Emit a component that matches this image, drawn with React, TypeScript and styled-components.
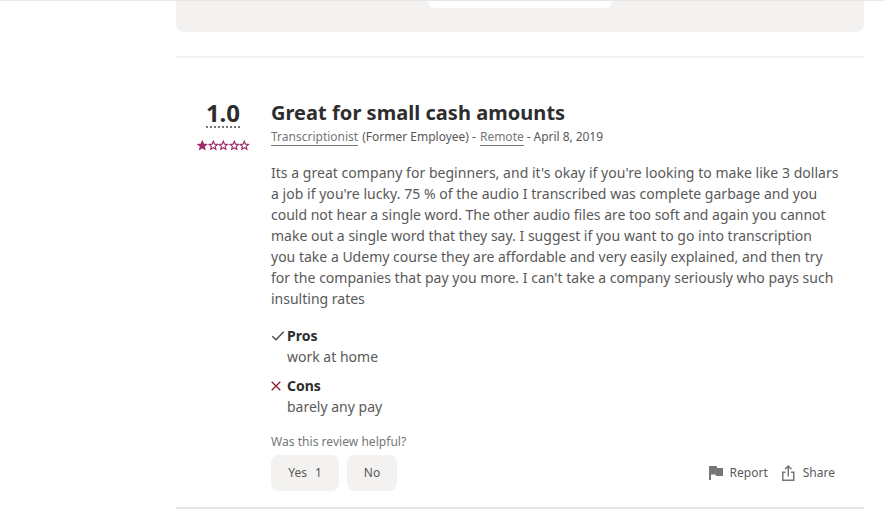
import React from 'react';
import styled, { createGlobalStyle } from 'styled-components';

const GlobalStyle = createGlobalStyle`
  * { box-sizing: border-box; }
  body {
    margin: 0;
    background: #fff;
    color: #595959;
    font-family: "Noto Sans", "Open Sans", sans-serif;
    overflow: hidden;
  }
  #root { display: flow-root; }
`;

const Page = styled.div`
  height: 521px;
  background: linear-gradient(#ebeae9, #ebeae9) top / 100% 1px no-repeat;
`;

const Column = styled.main`
  width: 688px;
  margin-left: 176px;
`;

const Banner = styled.div`
  height: 32px;
  display: flex;
  justify-content: center;
  border-top: 1px solid #e7e6e4;
  border-radius: 0 0 8px 8px;
  background: #f3f2f1;
`;

const BannerField = styled.div`
  width: 184px;
  height: 7px;
  border-radius: 0 0 6px 6px;
  background: #fff;
`;

const Review = styled.article`
  display: flex;
  height: 453px;
  margin-top: 24px;
  padding: 41px 26px 0 21px;
  border-top: 2px solid #f2f2f2;
  border-bottom: 2px solid #e5e5e5;
`;

const Rating = styled.div`
  width: 52px;
  margin-right: 22px;
  display: flex;
  flex-direction: column;
  align-items: center;
`;

const Score = styled.span`
  height: 29px;
  font-size: 24px;
  line-height: 27px;
  font-weight: 700;
  color: #2d2d2d;
  border-bottom: 2px dotted #767676;
`;

const Stars = styled.div`
  display: flex;
  margin: 12px 0 0 1px;
`;

const Star = styled.svg<{ $filled?: boolean }>`
  width: 10.6px;
  height: 11px;
  fill: ${(p) => (p.$filled ? '#9d2b6b' : 'none')};
  stroke: #9d2b6b;
  stroke-width: 1.15;
`;

const Body = styled.div`
  flex: 1;
  min-width: 0;
`;

const Title = styled.h2`
  margin: 0;
  font-size: 20px;
  line-height: 27px;
  letter-spacing: 0.04px;
  font-weight: 700;
  color: #2d2d2d;
`;

const Meta = styled.div`
  display: flex;
  gap: 4px;
  height: 20px;
  font-size: 12px;
  line-height: 22px;
  white-space: nowrap;
`;

const MetaLink = styled.a`
  height: 20px;
  color: #767676;
  border-bottom: 1px solid #767676;
`;

const MetaDate = styled.span`
  margin-left: -1px;
  letter-spacing: -0.05px;
`;

const Text = styled.p`
  margin: 16px 0 0;
  font-size: 14px;
  line-height: 21px;
`;

const Line = styled.span<{ $tracking: number }>`
  display: block;
  white-space: nowrap;
  letter-spacing: ${(p) => p.$tracking}px;
`;

const Point = styled.section<{ $gap: number }>`
  display: grid;
  grid-template-columns: 16px 1fr;
  align-items: center;
  margin-top: ${(p) => p.$gap}px;
  font-size: 14px;
  line-height: 21px;
`;

const PointTitle = styled.strong`
  color: #2d2d2d;
`;

const PointText = styled.span`
  grid-column: 2;
`;

const Question = styled.div`
  margin-top: 16px;
  font-size: 12px;
  line-height: 18px;
  letter-spacing: 0.04px;
  color: #767676;
`;

const Footer = styled.div`
  display: flex;
  align-items: center;
  gap: 8px;
  margin-top: 4px;
`;

const VoteButton = styled.button<{ $width: number }>`
  width: ${(p) => p.$width}px;
  height: 36px;
  display: flex;
  justify-content: center;
  align-items: center;
  gap: 8px;
  padding: 0;
  border: 0;
  border-radius: 8px;
  background: #f3f2f1;
  color: #595959;
  font: 12px/18px "Noto Sans", sans-serif;
`;

const Actions = styled.div`
  display: flex;
  gap: 14px;
  margin: 0 3px 0 auto;
`;

const Action = styled.button<{ $gap: number }>`
  display: flex;
  align-items: center;
  gap: ${(p) => p.$gap}px;
  padding: 0;
  border: 0;
  background: none;
  color: #595959;
  font: 12px/18px "Noto Sans", sans-serif;
`;

const Icon = styled.svg`
  display: block;
  flex: none;
`;

const reviewLines = [
  { tracking: 0.034, text: "Its a great company for beginners, and it's okay if you're looking to make like 3 dollars" },
  { tracking: 0.034, text: "a job if you're lucky. 75 % of the audio I transcribed was complete garbage and you" },
  { tracking: 0, text: 'could not hear a single word. The other audio files are too soft and again you cannot' },
  { tracking: 0.01, text: 'make out a single word that they say. I suggest if you want to go into transcription' },
  { tracking: 0.006, text: 'you take a Udemy course they are affordable and very easily explained, and then try' },
  { tracking: 0.022, text: "for the companies that pay you more. I can't take a company seriously who pays such" },
  { tracking: 0, text: 'insulting rates' },
];

export default function App() {
  return (
    <Page>
      <GlobalStyle />
      <Column>
        <Banner>
          <BannerField />
        </Banner>
        <Review>
          <Rating>
            <Score>1.0</Score>
            <Stars>
              {[1, 2, 3, 4, 5].map((n) => (
                <Star key={n} $filled={n === 1} viewBox="0 0 10.6 11">
                  <path d="M5.3 1.3 6.5 4.1 9.5 4.4 7.2 6.4 7.9 9.4 5.3 7.8 2.7 9.4 3.4 6.4 1.1 4.4 4.1 4.1Z" />
                </Star>
              ))}
            </Stars>
          </Rating>
          <Body>
            <Title>Great for small cash amounts</Title>
            <Meta>
              <MetaLink>Transcriptionist</MetaLink>
              <span>(Former Employee) -</span>
              <MetaLink>Remote</MetaLink>
              <MetaDate>- April 8, 2019</MetaDate>
            </Meta>
            <Text>
              {reviewLines.map(({ text, tracking }) => (
                <Line key={text} $tracking={tracking}>{text}</Line>
              ))}
            </Text>
            <Point $gap={16}>
              <Icon width="14" height="12" viewBox="0 0 14 12">
                <path d="M1.3 6.2 5 9.8 12.7 1.7" fill="none" stroke="#4b4b4b" strokeWidth="1.4" />
              </Icon>
              <PointTitle>Pros</PointTitle>
              <PointText>work at home</PointText>
            </Point>
            <Point $gap={8}>
              <Icon width="10" height="10" viewBox="0 0 10 10">
                <path d="M.7.7 9.3 9.3M9.3.7.7 9.3" fill="none" stroke="#8f1d2c" strokeWidth="1.3" />
              </Icon>
              <PointTitle>Cons</PointTitle>
              <PointText>barely any pay</PointText>
            </Point>
            <Question>Was this review helpful?</Question>
            <Footer>
              <VoteButton $width={68}>
                <span>Yes</span>
                <span>1</span>
              </VoteButton>
              <VoteButton $width={50}>No</VoteButton>
              <Actions>
                <Action $gap={7}>
                  <Icon width="14" height="14" viewBox="0 0 14 14">
                    <path d="M0 0H7.6L8.2 2H14V10H7L6.4 8.5H2V14H0Z" fill="#767676" />
                  </Icon>
                  Report
                </Action>
                <Action $gap={8}>
                  <Icon width="13" height="16" viewBox="0 0 13 16" fill="none" stroke="#767676" strokeWidth="1.5">
                    <path d="M3.5 7.25H.75V15.25H11.75V7.25H9" />
                    <path d="M6.25 11.5V1.2M3 4.2 6.25 1 9.5 4.2" />
                  </Icon>
                  Share
                </Action>
              </Actions>
            </Footer>
          </Body>
        </Review>
      </Column>
    </Page>
  );
}
